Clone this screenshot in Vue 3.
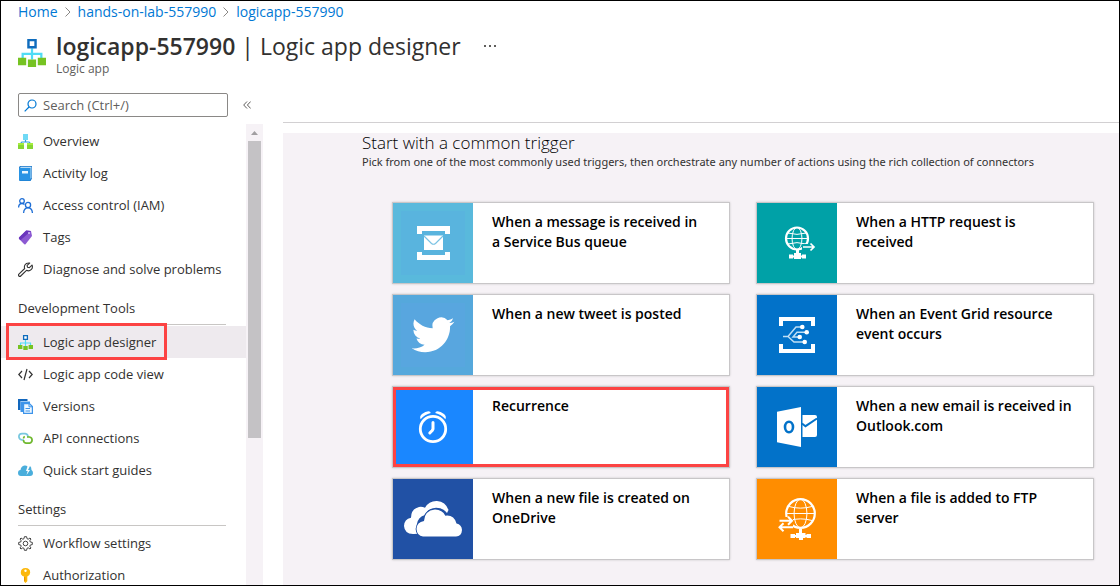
<script setup>
import { ref } from 'vue'

const search = ref('')
const crumbs = ['Home', 'hands-on-lab-557990', 'logicapp-557990']

// Navigation icons are drawn on a 15 x 15 grid.
const logicAppIcon =
  '<path d="M7.5 5v6M2.5 11V8h10v3" fill="none" stroke="#50dcf5" stroke-width="1.2"/><path d="M5.6.6h3.8v3.8H5.6z" fill="#fff" stroke="#0f6cbd" stroke-width="1.3"/><path d="M0 10h4.4v4H0zM5.3 11h4.4v4H5.3zM10.6 10H15v4h-4.400z" fill="#76c322"/>'

const general = [
  { label: 'Overview', icon: '<path d="M7.500 5v3M3 9.500V9q.2-1 1.500-1h6q1.300 0 1.500 1v.5" fill="none" stroke="#2f9ce0" stroke-width="1.200"/><path d="M5 0h5v6H5z" fill="#6fd9f5"/><path d="M0 9h6v6H0zM9 9h6v6H9z" fill="#86d633"/><path d="M0 9h6v2H0zM9 9h6v2H9z" fill="#a5ec3e"/>' },
  { label: 'Activity log', icon: '<path d="M2.500 0H14v12.500L12.500 15H2q-1-.5-1-1.500V1.500Q1 0 2.500 0z" fill="#1a76c9"/><path d="M3 .8h10.500v11.700H2.200V1.500z" fill="#b9dcf5"/><path d="M1 2h11.500v12.500H2q-1 0-1-1z" fill="#2893e4"/><path d="M4 5h6v2.500H4z" fill="#e8f6ff"/>' },
  { label: 'Access control (IAM)', icon: '<g fill="none" stroke="#1f6fd6" stroke-width="1.300"><circle cx="4" cy="3" r="2.300"/><path d="M.6 9.500Q.7 5.500 4 5.500q1.500 0 2.500 1"/><circle cx="10" cy="7" r="2.600"/><path d="M5.600 15Q5.800 9.800 10 9.800t4.400 5.200"/></g>' },
  { label: 'Tags', icon: '<path d="M1 7.500 8.200.6 13 1l1 5-6.500 8.200q-.8.600-1.500-.1L1.200 9q-.6-.7-.2-1.500z" fill="#8c59d2"/><path d="M1 7.500 8.200.6 13 1 2.500 10.300 1.200 9q-.6-.7-.2-1.500z" fill="#6a35bd"/><circle cx="11" cy="3" r="1" fill="#d9c4f7"/>' },
  { label: 'Diagnose and solve problems', icon: '<path d="M10.300 1a4 4 0 0 0-3.600 5.500L.9 12.200a1.250 1.250 0 0 0 1.800 1.800l5.800-5.700A4 4 0 0 0 14 3.100l-2.600 2.500-1.900-.3-.4-1.900 2.600-2.300a4 4 0 0 0-1.400-.1z" fill="#fff" stroke="#333" stroke-width="1.100" stroke-linejoin="round"/>' }
]
const tools = [
  { label: 'Logic app designer', icon: logicAppIcon, active: true },
  { label: 'Logic app code view', icon: '<path d="M4 4 .8 7.500 4 11M11 4l3.200 3.500L11 11M9 2 6 13" fill="none" stroke="#333" stroke-width="1.200"/>' },
  { label: 'Versions', icon: '<path d="M0 0h9.500v2H2.500v9H0z" fill="#1267bd"/><path d="M2.500 2.500H12v2H5V13H2.500z" fill="#3d94ea"/><path d="M5.600 4.600h5.800l3 3v6.800H5.600z" fill="#eef7ff" stroke="#3d94ea" stroke-width="1.200"/><path d="M11 4.500v3.300h3.400M7.500 9.500H12M7.500 12H12" fill="none" stroke="#3d94ea"/>' },
  { label: 'API connections', icon: '<g fill="none" stroke-width="1.700"><path d="M6 9H4Q.9 8.200.9 5.500T4 2.600h3.200Q10 3 10 6" stroke="#79c8df"/><path d="M5.500 7.500q0-1.500 1.300-2M9 6h2.500q2.600.5 2.600 3t-2.600 3.200H8Q5.500 11.800 5.500 9" stroke="#6fb82e"/></g>' },
  { label: 'Quick start guides', icon: '<path d="M3 13Q0 12.800 0 10t2.500-3Q3 3 6.500 2.500q2-.2 3 1L8 8h1.700L8.500 12 12 7h-2l2-4q1.500 1.200 1.500 4Q15 8 15 10q0 2.800-3 3z" fill="#4aaedc"/>' }
]
const settings = [
  { label: 'Workflow settings', icon: '<g fill="none" stroke="#444"><circle cx="7.500" cy="7.500" r="2.300"/><path stroke-linejoin="round" d="m6.400.7-.4 2-1.200.5L3 2 2 3l1.200 1.800L2.700 6l-2 .4v2.200l2 .4.500 1.200L2 12l1 1 1.800-1.200 1.200.5.4 2h2.200l.4-2 1.200-.5L12 13l1-1-1.200-1.800.5-1.200 2-.4V6.400l-2-.4-.5-1.200L13 3l-1-1-1.800 1.200L9 2.700l-.4-2z"/></g>' },
  { label: 'Authorization', icon: '<path d="M7.500 0q4.700.2 4.700 4.500Q12 7.500 9.300 8.500v4.700l-1.800 1.800L6 13.500v-5Q2.800 7.500 2.800 4.500 2.800.2 7.500 0z" fill="#fcb80d"/><circle cx="7.500" cy="2.700" r="1.200" fill="#fff"/><path d="M6.700 9v4" stroke="#e38d00"/>' }
]
const groups = [
  { items: general },
  { title: 'Development Tools', items: tools },
  { title: 'Settings', items: settings }
]

const globe = (x, y, r) =>
  `<g fill="none" stroke="#fff"><circle cx="${x}" cy="${y}" r="${r}" stroke-width="2.2"/><ellipse cx="${x}" cy="${y}" rx="${r * 0.45}" ry="${r}"/><path d="M${x - r} ${y}h${2 * r}M${x - r * 0.85} ${y - r * 0.5}q${r * 0.85} ${r * 0.25} ${r * 1.7} 0M${x - r * 0.85} ${y + r * 0.5}q${r * 0.85} ${-r * 0.25} ${r * 1.7} 0"/></g>`

// Tile pictures are drawn on an 80 x 80 grid.
const triggers = [
  { label: 'When a message is received in a\u00a0Service Bus queue', color: '#59b9dc', icon: '<path d="M8 8h64v64H8z" fill="#59b4de"/><path d="M24 23h33v8h-5v-3H29v3h-5zM24 57h33v-8h-5v3H29v-3h-5zM31 32.500h19V47H31z" fill="#fff"/><path d="m31 33 7.500 7.500q2 1.500 4 0L50 33" fill="none" stroke="#79c2e3" stroke-width="1.200"/>' },
  { label: 'When a HTTP request is received', color: '#00a1a7', icon: globe(40, 35.5, 11) + '<path d="M45 41h8v7h-8z" fill="#00a1a7"/><path d="M46 44h11M53.500 40.500 57 44l-3.500 3.500" fill="none" stroke="#fff" stroke-width="1.700"/><path d="M39 47h3v3h2v1h-7v-1h2zM32 51.500h4v4h-4zM37 50.500h7V56h-7zM45 51.500h4v4h-4zM34 52.500h13v2H34z" fill="#fff"/>' },
  { label: 'When a new tweet is posted', color: '#55a8dc', icon: '<path d="M8 8h64v64H8z" fill="#58a6df"/><path transform="translate(18.700 18.500) scale(1.780)" fill="#fff" d="M23.953 4.570a10 10 0 01-2.825.775 4.958 4.958 0 002.163-2.723c-.951.555-2.005.959-3.127 1.184a4.920 4.920 0 00-8.384 4.482C7.690 8.095 4.067 6.130 1.640 3.162a4.822 4.822 0 00-.666 2.475c0 1.710.870 3.213 2.188 4.096a4.904 4.904 0 01-2.228-.616v.060a4.923 4.923 0 003.946 4.827 4.996 4.996 0 01-2.212.085 4.936 4.936 0 004.604 3.417 9.867 9.867 0 01-6.102 2.105c-.390 0-.779-.023-1.170-.067a13.995 13.995 0 007.557 2.209c9.053 0 13.998-7.496 13.998-13.985 0-.210 0-.420-.015-.630A9.935 9.935 0 0024 4.590z"/>' },
  { label: 'When an Event Grid resource event occurs', color: '#0272c9', icon: '<path d="M22 22h36v9h-4v-5H26v5h-4zM22 58h36v-9h-4v5H26v-5h-4z" fill="#fff"/><g fill="none" stroke="#c0dff5" stroke-width="1.500"><path d="M45 32h-6l-8 9.500h-5M50 37.300H40L36 42h7M31 41.500l6 5.500h11"/></g><g fill="#fff"><circle cx="45.300" cy="32" r="2.300"/><circle cx="49.700" cy="37.300" r="2.300"/><circle cx="42.700" cy="42" r="2.300"/><circle cx="47.700" cy="47" r="2.300"/></g>' },
  { label: 'Recurrence', color: '#1a87ff', marked: true, icon: '<g fill="none" stroke="#fff" stroke-linecap="round" stroke-linejoin="round"><circle cx="40" cy="42" r="12.700" stroke-width="2.800"/><path d="M40 35.500V42l-.8 1.500-2.400 2.500" stroke-width="3"/></g><path d="M27.600 32.300q-1.400-3 1.400-5.300 3.600-2.800 6.600-2.700 1.800.2 2.200 1.700-6 1.400-10.200 6.300zM52.400 32.300q1.400-3-1.400-5.300-3.600-2.800-6.600-2.700-1.800.2-2.200 1.700 6 1.400 10.200 6.300z" fill="#fff"/>' },
  { label: 'When a new email is received in Outlook.com', color: '#0272c9', icon: '<path d="m20 24.700 24-4.700v40l-24-4.700zM45.500 28H58q2 0 2 2v18q0 2-2 2H45.500z" fill="#fff"/><ellipse cx="32" cy="40" rx="4" ry="5.300" fill="none" stroke="#0272c9" stroke-width="2.600"/><path d="m45 36.500 3.500 2.700L60 31.500" fill="none" stroke="#0272c9" stroke-width="2"/>' },
  { label: 'When a new file is created on OneDrive', color: '#2151a5', icon: '<path d="M21 55h-1q-8.500-.3-9-8 .2-7 7-8.300 0-8.700 8-10.700 3-.5 6 .7 4-7 12-6.700 8.500.5 11.500 9l-1.500 3q-4-5.300-11-5.300-8 .3-11 7.300-7 2-8 9-.2 6 3.500 9.500z" fill="#fff"/><path d="M30 57.500q-6-.5-6.500-7.500.3-7 7.500-8 .5-10.500 11-11.500 7.500.3 10.300 6.200 8.700-1.200 11.200 7.800 5.200 1 5.500 6.500-.3 6-6 6.500z" fill="#fff" stroke="#2151a5" stroke-width="1.800" paint-order="stroke"/>' },
  { label: 'When a file is added to FTP server', color: '#ff8d00', icon: globe(43.5, 34.5, 14.3) + '<path d="M21 38h15v14H21z" fill="#ff8d00"/><path d="M22.500 41.700h13M31 37.700l4 4-4 4M36 48.300H22M26.500 44.300l-4 4 4 4" fill="none" stroke="#fff" stroke-width="2"/><path d="M42 50h3v4h3.500v5H46v2h-4v-2h-3v-5h3zM33.500 55h4.500v4h-4.500zM49.500 55H54v4h-4.500zM36 56h15v2H36z" fill="#fff"/>' }
]
</script>

<template>
  <div class="page">
    <nav class="crumbs" aria-label="Breadcrumb">
      <template v-for="(c, i) in crumbs" :key="c">
        <svg v-if="i" class="chevron" viewBox="0 0 6 10"><path d="m.5.5 4.500 4.500L.5 9.500" /></svg>
        <a href="#">{{ c }}</a>
      </template>
    </nav>

    <header class="title">
      <svg class="title-icon" viewBox="0 0 15 15" v-html="logicAppIcon"></svg>
      <div>
        <div class="title-row">
          <h1><b>logicapp-557990</b> | Logic app designer</h1>
          <button class="more" type="button" aria-label="More actions">
            <svg viewBox="0 0 12 2"><path d="M0 0h2v2H0zM5 0h2v2H5zM10 0h2v2h-2z" /></svg>
          </button>
        </div>
        <p class="kind">Logic app</p>
      </div>
    </header>

    <div class="body">
      <aside class="side">
        <div class="search-row">
          <label class="search">
            <svg viewBox="0 0 13 13"><circle cx="8" cy="5" r="4" /><path d="M5 8 .7 12.300" /></svg>
            <input v-model="search" type="text" placeholder="Search (Ctrl+/)" aria-label="Search menu" />
          </label>
          <button class="collapse" type="button" aria-label="Collapse menu">
            <svg viewBox="0 0 8 8"><path d="M4 .5.700 4 4 7.500M7.700.5 4.400 4l3.300 3.500" /></svg>
          </button>
        </div>
        <div class="menu-row">
          <nav class="menu" aria-label="Resource menu">
            <section v-for="(g, i) in groups" :key="i">
              <h2 v-if="g.title">{{ g.title }}</h2>
              <a v-for="item in g.items" :key="item.label" href="#" :class="{ active: item.active }">
                <svg viewBox="0 0 15 15" v-html="item.icon"></svg>
                <span>{{ item.label }}</span>
                <i v-if="item.active" class="mark"></i>
              </a>
            </section>
          </nav>
          <div class="track" aria-hidden="true">
            <svg viewBox="0 0 7 4"><path d="m3.500 0 3.500 4H0z" /></svg>
            <div class="thumb"></div>
          </div>
        </div>
      </aside>

      <main class="main">
        <div class="toolbar"></div>
        <div class="canvas">
          <h2>Start with a common trigger</h2>
          <p>Pick from one of the most commonly used triggers, then orchestrate any number of actions using the rich collection of connectors</p>
          <div class="grid">
            <button v-for="t in triggers" :key="t.label" class="card" type="button">
              <svg viewBox="0 0 80 80" :style="{ background: t.color }" v-html="t.icon"></svg>
              <span>{{ t.label }}</span>
              <i v-if="t.marked" class="mark"></i>
            </button>
          </div>
        </div>
      </main>
    </div>
  </div>
</template>

<style>
body {
  margin: 0;
}
</style>

<style scoped>
* {
  box-sizing: border-box;
}
.page {
  display: flex;
  flex-direction: column;
  height: 100vh;
  overflow: hidden;
  border: 1px solid #000;
  background: #fff;
  color: #323130;
  font: 13px/20px "Open Sans", "Noto Sans", sans-serif;
}
h1, h2, p {
  margin: 0;
  font-weight: 400;
}
button {
  padding: 0;
  border: 0;
  background: none;
  color: inherit;
  font: inherit;
}
a {
  color: inherit;
  text-decoration: none;
}
svg {
  display: block;
  flex: none;
}
.crumbs {
  display: flex;
  align-items: center;
  gap: 7px;
  padding: 1px 17px;
  font-size: 14px;
}
.crumbs a {
  color: #0078d4;
}
.chevron {
  width: 6px;
  height: 10px;
  fill: none;
  stroke: #8a8886;
}
.title {
  display: flex;
  gap: 10px;
  padding: 7px 17px 0;
}
.title-icon {
  width: 28px;
  height: 28px;
  margin-top: 9px;
}
.title-row {
  display: flex;
  align-items: center;
  gap: 23px;
}
h1 {
  font-size: 23px;
  line-height: 32px;
}
h1 b {
  font-weight: 600;
}
.more svg {
  width: 12px;
  height: 2px;
  fill: #605e5c;
}
.kind {
  font-size: 12px;
  line-height: 14px;
  color: #605e5c;
}
.body {
  display: flex;
  flex: 1;
  min-height: 0;
  padding-top: 17px;
}
.side {
  display: flex;
  flex-direction: column;
  width: 262px;
}
.search-row {
  display: flex;
  align-items: center;
  gap: 15px;
  padding-left: 17px;
}
.search {
  display: flex;
  align-items: center;
  gap: 6px;
  width: 210px;
  height: 24px;
  padding: 0 5px;
  border: 1px solid #8a8886;
  border-radius: 2px;
}
.search svg {
  width: 13px;
  height: 13px;
  fill: none;
  stroke: #0078d4;
  stroke-width: 1.2;
}
.search input {
  flex: 1;
  min-width: 0;
  padding: 0;
  border: 0;
  outline: 0;
  background: none;
  font: inherit;
}
.search input::placeholder {
  color: #605e5c;
  opacity: 1;
}
.collapse svg {
  width: 8px;
  height: 8px;
  fill: none;
  stroke: #605e5c;
}
.menu-row {
  display: flex;
  flex: 1;
  min-height: 0;
  margin-top: 7px;
}
.menu {
  flex: 1;
  overflow: hidden;
  padding-top: 1px;
}
.menu a {
  position: relative;
  display: flex;
  align-items: center;
  gap: 10px;
  height: 32px;
  padding-left: 17px;
}
.menu a.active {
  background: #eeeaee;
}
.menu svg {
  width: 15px;
  height: 15px;
}
.menu h2 {
  height: 40px;
  margin: 0 20px 1px 17px;
  padding-top: 13px;
  border-bottom: 1px solid #c8c6c4;
  font-size: 13px;
  line-height: 20px;
}
.mark {
  position: absolute;
  inset: 0;
  border: 3px solid #fc4343;
}
.menu .mark {
  inset: -3px 79px -2px 5px;
}
.track {
  width: 17px;
  padding: 7px 2px 0;
  background: #f6f2f6;
}
.track svg {
  width: 7px;
  height: 4px;
  margin: 0 auto 6px;
  fill: #a19fa1;
}
.thumb {
  height: 297px;
  background: #c4c2c5;
}
.main {
  display: flex;
  flex: 1;
  flex-direction: column;
  min-width: 0;
  padding-left: 20px;
}
.toolbar {
  height: 30px;
  margin-bottom: 10px;
  border-bottom: 1px solid #d2d0d2;
}
.canvas {
  flex: 1;
  min-height: 0;
  padding-left: 79px;
  background: #f6f2f6;
}
.canvas h2 {
  color: #000;
  font-size: 17px;
  font-weight: 300;
  line-height: 20px;
}
.canvas p {
  font-family: "Noto Sans", sans-serif;
  font-size: 11px;
  line-height: 18px;
}
.grid {
  display: grid;
  grid-template-columns: 1fr 1fr;
  gap: 10px 26px;
  padding: 31px 25px 0 30px;
}
.card {
  position: relative;
  display: flex;
  border: 1px solid #c8c6c8;
  background: #fff;
  box-shadow: 0 0 2px #c8c6c8;
  color: #000;
  font-size: 14px;
  font-weight: 600;
  text-align: left;
}
.card svg {
  width: 80px;
  height: 80px;
}
.card span {
  padding: 9px 19px 0;
}
</style>
